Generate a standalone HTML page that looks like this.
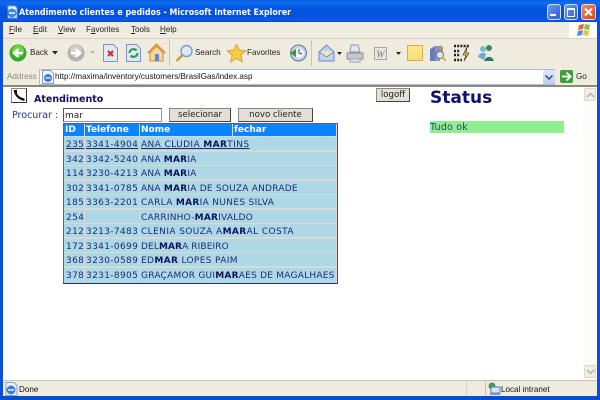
<!DOCTYPE html>
<html><head><meta charset="utf-8">
<style>
html,body{margin:0;padding:0;width:600px;height:400px;overflow:hidden;background:#fff}
div,svg{position:absolute}
.t{white-space:nowrap;font-family:"Liberation Sans",sans-serif;font-size:8.1px;color:#222;line-height:12px}
.v{white-space:nowrap;font-family:"DejaVu Sans",sans-serif;color:#1e2a78;font-size:9px;line-height:12px}
.p{letter-spacing:.35px}
.cell{background:#add8e6}
.hd{background:#0a84ff;color:#fff;font-weight:bold;font-family:"DejaVu Sans",sans-serif;font-size:9px;line-height:13px;white-space:nowrap;padding-left:1px;box-sizing:border-box;height:12px}
.btn{box-sizing:border-box;background:#e4e0d6;border:1px solid #444;border-left-color:#8a8a8a;border-top-color:#8a8a8a;text-align:center;font-family:"DejaVu Sans",sans-serif;font-size:8.6px;color:#222;line-height:13px;white-space:nowrap}
.v b{color:#10105e}
.v u{text-decoration:underline}
</style></head><body>

<!-- window frame -->
<div style="left:0;top:0;width:600px;height:22px;background:linear-gradient(#0a5ee0 0,#0f6df2 3px,#0554e2 8px,#0350dc 16px,#0a5ce8 20px,#0446cc 22px)"></div>
<div style="left:0;top:22px;width:3px;height:378px;background:#0a50d8"></div>
<div style="left:597px;top:22px;width:3px;height:378px;background:#0a50d8"></div>
<div style="left:0;top:396px;width:600px;height:4px;background:#0a4ed0"></div>

<!-- title -->
<svg style="left:5px;top:5px" width="14" height="14" viewBox="0 0 14 14"><path d="M3 1h7l2 2v10H3z" fill="#f0f4ff" stroke="#8aa0c8"/><circle cx="7" cy="8" r="4.500" fill="#3a8ae0"/><path d="M4 8h6" stroke="#fff" stroke-width="1.400"/></svg>
<div class="t" style="left:19px;top:7px;color:#fff;font-weight:bold;font-size:9px;font-family:'DejaVu Sans',sans-serif;transform-origin:left;transform:scaleX(.88)">Atendimento clientes e pedidos - Microsoft Internet Explorer</div>

<!-- window buttons -->
<div style="left:547px;top:4px;width:12px;height:14px;border:1px solid #cfe0fa;border-radius:3px;background:linear-gradient(135deg,#6f9cf0,#2a58d8)"></div>
<div style="left:550px;top:14px;width:6px;height:2px;background:#fff"></div>
<div style="left:564px;top:4px;width:12px;height:14px;border:1px solid #cfe0fa;border-radius:3px;background:linear-gradient(135deg,#6f9cf0,#2a58d8)"></div>
<div style="left:567px;top:8px;width:6px;height:6px;border:1px solid #fff;border-top-width:2px"></div>
<div style="left:581px;top:4px;width:13px;height:14px;border:1px solid #f3d8cc;border-radius:3px;background:linear-gradient(135deg,#f0906a,#d8401c)"></div>
<svg style="left:581px;top:5px" width="15" height="14"><path d="M4 3.500l7 7M11 3.500l-7 7" stroke="#fff" stroke-width="2"/></svg>

<!-- menu bar -->
<div style="left:3px;top:22px;width:594px;height:17px;background:#efebde"></div>
<div style="left:569px;top:22px;width:28px;height:17px;background:#fff"></div>
<svg style="left:576px;top:23px" width="16" height="14" viewBox="0 0 16 14"><path d="M3 2l5-1-1 5-5 1z" fill="#e8643c"/><path d="M9 1l5 1-1 5-5-1z" fill="#8ac23c"/><path d="M2 8l5-1-1 5-5 1z" fill="#4a8ae8"/><path d="M8 7l5 1-1 5-5-1z" fill="#f2c230"/></svg>
<div class="t" style="left:9px;top:24px"><u>F</u>ile</div>
<div class="t" style="left:33px;top:24px"><u>E</u>dit</div>
<div class="t" style="left:58px;top:24px"><u>V</u>iew</div>
<div class="t" style="left:86px;top:24px">F<u>a</u>vorites</div>
<div class="t" style="left:131px;top:24px"><u>T</u>ools</div>
<div class="t" style="left:160px;top:24px"><u>H</u>elp</div>

<!-- toolbar -->
<div style="left:3px;top:38px;width:594px;height:30px;background:#efecdf;border-top:1px solid #d8d4c4;box-sizing:border-box"></div>
<svg style="left:9px;top:44px" width="18" height="18"><circle cx="9" cy="9" r="8.500" fill="#3aa828"/><circle cx="9" cy="7" r="6" fill="#6fd04a"/><path d="M14 9H6M9.500 5L5 9l4.500 4" fill="none" stroke="#fff" stroke-width="2.400"/></svg>
<div class="t" style="left:30px;top:47px">Back</div>
<svg style="left:52px;top:51px" width="6" height="4"><path d="M0 0h6L3 3.500z" fill="#222"/></svg>
<svg style="left:67px;top:44px" width="18" height="18"><circle cx="9" cy="9" r="8.500" fill="#b4b4ac"/><circle cx="9" cy="7" r="6" fill="#cfcfc8"/><path d="M4 9h8M8.500 5L13 9l-4.500 4" fill="none" stroke="#fff" stroke-width="2.400"/></svg>
<svg style="left:90px;top:51px" width="6" height="4"><path d="M0 0h5L2.500 3z" fill="#b8b8b0"/></svg>
<svg style="left:103px;top:44px" width="15" height="18"><path d="M.5.500h10l4 4v13H.5z" fill="#dfe8f8" stroke="#7f94c8"/><path d="M5 7l5 5M10 7l-5 5" stroke="#d8301c" stroke-width="2.200"/></svg>
<svg style="left:126px;top:44px" width="15" height="18"><path d="M.5.500h10l4 4v13H.5z" fill="#dfe8f8" stroke="#7f94c8"/><path d="M3.500 9a4 4 0 0 1 7-2.500M11.500 9a4 4 0 0 1-7 2.500" fill="none" stroke="#2aa03c" stroke-width="2.200"/></svg>
<svg style="left:147px;top:43px" width="19" height="19"><path d="M9.500 1L1 9.500l2 1V18h13v-7.500l2-1z" fill="#f4d8a0" stroke="#c88a3c"/><path d="M9.500 1L1 9.500l2 1 6.500-6.500 6.500 6.500 2-1z" fill="#e8963c"/><rect x="8" y="11" width="4" height="7" fill="#5a88d8"/></svg>
<div style="left:169px;top:40px;width:1px;height:26px;background:#c8c4b4"></div>
<svg style="left:175px;top:44px" width="18" height="19"><circle cx="11.500" cy="7" r="5.500" fill="#dbeafa" stroke="#7a9ac8" stroke-width="1.400"/><path d="M7.500 11l-6 6" stroke="#d8963c" stroke-width="2.600"/></svg>
<div class="t" style="left:195px;top:47px">Search</div>
<svg style="left:227px;top:44px" width="19" height="19"><path d="M9.500 0l2.700 6.200 6.800.6-5.200 4.400 1.600 6.800-5.900-3.600-5.900 3.600 1.600-6.800L0 6.800l6.800-.6z" fill="#f6cc42" stroke="#d8962c" stroke-width=".8"/></svg>
<div class="t" style="left:247px;top:47px">Favorites</div>
<svg style="left:289px;top:44px" width="18" height="18"><circle cx="9.500" cy="9" r="8" fill="#c8d4e0" stroke="#5a7898"/><circle cx="10" cy="9" r="5" fill="#eef4fa"/><path d="M1 9l6-4v8z" fill="#2fa02c"/><path d="M10 5v4l3 1" stroke="#2a4a8a" fill="none"/></svg>
<div style="left:311px;top:40px;width:1px;height:26px;background:#c8c4b4"></div>
<svg style="left:318px;top:44px" width="17" height="18"><path d="M1 8l7.500-7L16 8v9H1z" fill="#bcd4f4" stroke="#6a8ac8"/><path d="M3 7h11v4l-5.500 3L3 11z" fill="#f4e8b0"/><path d="M1 8l7.500 5L16 8" fill="none" stroke="#6a8ac8"/></svg>
<svg style="left:337px;top:52px" width="5" height="3"><path d="M0 0h5L2.500 3z" fill="#222"/></svg>
<svg style="left:346px;top:44px" width="18" height="19"><path d="M5 1h7l2 7H4z" fill="#dfe8f4" stroke="#8a9ab0"/><path d="M1 9h16v6H1z" fill="#c4c8cc" stroke="#8a9098"/><path d="M4 15h10v3H4z" fill="#e8e8e8" stroke="#9aa0a8"/></svg>
<svg style="left:374px;top:47px" width="13" height="13"><rect x=".5" y=".5" width="12" height="12" fill="#e8e8e4" stroke="#a8a8a0"/><text x="2" y="10.500" font-family="Liberation Serif,serif" font-size="10" font-weight="bold" font-style="italic" fill="#909088">W</text></svg>
<svg style="left:396px;top:52px" width="5" height="3"><path d="M0 0h5L2.500 3z" fill="#222"/></svg>
<div style="left:407px;top:45px;width:16px;height:16px;background:linear-gradient(#fbe88c,#f8dc78);border:1px solid #d8b040;box-sizing:border-box"></div>
<svg style="left:429px;top:44px" width="17" height="18"><path d="M1 5l5-3v15H1z" fill="#6a7ab8"/><path d="M6 2h5v15H6z" fill="#8a90c8"/><path d="M11 1l3 2v6h-3z" fill="#b89868"/><circle cx="11" cy="11" r="3.500" fill="#d8e8f4" stroke="#6a7a98"/><path d="M13 13l3.500 3.500" stroke="#d8a030" stroke-width="1.600"/></svg>
<svg style="left:453px;top:44px" width="18" height="18"><path d="M1 2h15M1 7h6M1 11h6M1 16h8" stroke="#222" stroke-width="2.400" stroke-dasharray="2 1.200"/><path d="M14 3l-4 8h3l-2 6 5-8h-3z" fill="#f0c820" stroke="#222" stroke-width=".6"/></svg>
<svg style="left:477px;top:44px" width="18" height="18"><circle cx="6" cy="5" r="3" fill="#7ab8d8"/><circle cx="12" cy="4" r="3" fill="#3a8a58"/><path d="M7 17a5.500 7 0 0 1 10 0z" fill="#2a7a68"/><path d="M1 13a5 5 0 0 1 8-3l-2 6z" fill="#6aa8c8"/></svg>

<!-- address bar -->
<div style="left:3px;top:68px;width:594px;height:18px;background:#efecdf"></div>
<div class="t" style="left:7px;top:71px;color:#8a8a80">Address</div>
<div style="left:39px;top:69px;width:516px;height:16px;background:#fff;border:1px solid #a8bcd8;box-sizing:border-box"></div>
<svg style="left:41px;top:70px" width="14" height="14"><path d="M1.500.500h8l3 3v10h-11z" fill="#f4f6fc" stroke="#8a9ac8"/><circle cx="7" cy="8" r="4" fill="#3a80d8"/><path d="M4.500 8h5" stroke="#fff" stroke-width="1.200"/></svg>
<div class="t" style="left:55px;top:71px;color:#111">http://maxima/inventory/customers/BrasilGas/index.asp</div>
<div style="left:543px;top:70px;width:12px;height:14px;background:linear-gradient(#dfe8fb,#b8cdf4);border-radius:2px"></div>
<svg style="left:545px;top:75px" width="8" height="5"><path d="M.5.500L4 4 7.500.500" fill="none" stroke="#3a4a78" stroke-width="1.500"/></svg>
<div style="left:560px;top:70px;width:13px;height:13px;background:#3ea03c;border-radius:2px"></div>
<svg style="left:560px;top:70px" width="13" height="13"><path d="M2 6.500h8M6.500 2.500l4 4-4 4" fill="none" stroke="#fff" stroke-width="1.800"/></svg>
<div class="t" style="left:576px;top:71px">Go</div>

<!-- content -->
<div style="left:3px;top:85px;width:594px;height:2px;background:#8a8a78"></div>
<div style="left:3px;top:87px;width:580px;height:293px;background:#fff"></div>

<!-- scrollbar -->
<div style="left:583px;top:87px;width:14px;height:293px;background:#fbfbf7"></div>
<div style="left:584px;top:88px;width:12px;height:13px;background:#f0efe4;border:1px solid #dcd8c8;border-radius:2px;box-sizing:border-box"></div>
<svg style="left:586px;top:92px" width="9" height="6"><path d="M1 5l3.500-3.500L8 5" fill="none" stroke="#b4b2a0" stroke-width="1.500"/></svg>
<div style="left:584px;top:365px;width:12px;height:13px;background:#f0efe4;border:1px solid #dcd8c8;border-radius:2px;box-sizing:border-box"></div>
<svg style="left:586px;top:369px" width="9" height="6"><path d="M1 1l3.500 3.500L8 1" fill="none" stroke="#b4b2a0" stroke-width="1.500"/></svg>

<!-- phone icon -->
<div style="left:11px;top:88px;width:16px;height:15px;background:#fff;border:1px solid #888;border-right-color:#333;border-bottom-color:#333;box-sizing:border-box"></div>
<svg style="left:12px;top:89px" width="14" height="13"><path d="M3 2c1 5 4 7 8 8.500" fill="none" stroke="#111" stroke-width="2.200"/><path d="M1.500 1l3.500 0 0 3-2.500 0zM9 8.500l3.500 1 0 2.500-3.500-1z" fill="#111"/></svg>

<div class="v" style="left:34px;top:94px;font-weight:bold;color:#10105e;font-size:9.500px">Atendimento</div>
<div class="v" style="left:12px;top:110px;font-size:9.500px;color:#2a3490">Procurar :</div>
<div style="left:63px;top:108px;width:99px;height:14px;background:#fff;border:1px solid #555;border-right-color:#999;border-bottom-color:#999;box-sizing:border-box"></div>
<div class="v" style="left:65px;top:110px;color:#222">mar</div>
<div class="btn" style="left:169px;top:108px;width:62px;height:14px">selecionar</div>
<div class="btn" style="left:238px;top:108px;width:75px;height:14px">novo cliente</div>
<div class="btn" style="left:376px;top:88px;width:34px;height:14px">logoff</div>

<!-- status -->
<div class="v" style="left:430px;top:89px;font-size:17px;font-weight:bold;color:#10106e;line-height:18px">Status</div>
<div style="left:430px;top:121px;width:134px;height:12px;background:#90ee90"></div>
<div class="v" style="left:430px;top:122px;color:#2a3a80;font-size:9.500px;letter-spacing:.2px">Tudo ok</div>

<!-- table -->
<div style="left:63px;top:123px;width:275px;height:161px;background:#d8d8d4;border:1px solid #5a5aa0;border-right:1px solid #4a4a80;border-bottom:1px solid #2a2a70;box-sizing:border-box"></div>
<div class="hd" style="left:64px;top:124px;width:20px">ID</div>
<div class="hd" style="left:85px;top:124px;width:54px">Telefone</div>
<div class="hd" style="left:140px;top:124px;width:92px">Nome</div>
<div class="hd" style="left:233px;top:124px;width:103px">fechar</div>

<div class="cell" style="left:64px;top:137px;width:20px;height:13px"></div><div class="cell" style="left:85px;top:137px;width:54px;height:13px"></div><div class="cell" style="left:140px;top:137px;width:196px;height:13px"></div>
<div class="cell" style="left:64px;top:152px;width:20px;height:13px"></div><div class="cell" style="left:85px;top:152px;width:54px;height:13px"></div><div class="cell" style="left:140px;top:152px;width:196px;height:13px"></div>
<div class="cell" style="left:64px;top:166px;width:20px;height:13px"></div><div class="cell" style="left:85px;top:166px;width:54px;height:13px"></div><div class="cell" style="left:140px;top:166px;width:196px;height:13px"></div>
<div class="cell" style="left:64px;top:181px;width:20px;height:13px"></div><div class="cell" style="left:85px;top:181px;width:54px;height:13px"></div><div class="cell" style="left:140px;top:181px;width:196px;height:13px"></div>
<div class="cell" style="left:64px;top:195px;width:20px;height:13px"></div><div class="cell" style="left:85px;top:195px;width:54px;height:13px"></div><div class="cell" style="left:140px;top:195px;width:196px;height:13px"></div>
<div class="cell" style="left:64px;top:210px;width:20px;height:13px"></div><div class="cell" style="left:85px;top:210px;width:54px;height:13px"></div><div class="cell" style="left:140px;top:210px;width:196px;height:13px"></div>
<div class="cell" style="left:64px;top:224px;width:20px;height:13px"></div><div class="cell" style="left:85px;top:224px;width:54px;height:13px"></div><div class="cell" style="left:140px;top:224px;width:196px;height:13px"></div>
<div class="cell" style="left:64px;top:239px;width:20px;height:13px"></div><div class="cell" style="left:85px;top:239px;width:54px;height:13px"></div><div class="cell" style="left:140px;top:239px;width:196px;height:13px"></div>
<div class="cell" style="left:64px;top:253px;width:20px;height:13px"></div><div class="cell" style="left:85px;top:253px;width:54px;height:13px"></div><div class="cell" style="left:140px;top:253px;width:196px;height:13px"></div>
<div class="cell" style="left:64px;top:268px;width:20px;height:15px"></div><div class="cell" style="left:85px;top:268px;width:54px;height:15px"></div><div class="cell" style="left:140px;top:268px;width:196px;height:15px"></div>

<div class="v p" style="left:66px;top:139px"><u>235</u></div><div class="v p" style="left:86px;top:139px"><u>3341-4904</u></div><div class="v" style="left:141px;top:139px;letter-spacing:.39px"><u>ANA CLUDIA <b>MAR</b>TINS</u></div>
<div class="v p" style="left:66px;top:154px">342</div><div class="v p" style="left:86px;top:154px">3342-5240</div><div class="v" style="left:141px;top:154px;letter-spacing:.22px">ANA <b>MAR</b>IA</div>
<div class="v p" style="left:66px;top:168px">114</div><div class="v p" style="left:86px;top:168px">3230-4213</div><div class="v" style="left:141px;top:168px;letter-spacing:.22px">ANA <b>MAR</b>IA</div>
<div class="v p" style="left:66px;top:183px">302</div><div class="v p" style="left:86px;top:183px">3341-0785</div><div class="v" style="left:141px;top:183px;letter-spacing:.23px">ANA <b>MAR</b>IA DE SOUZA ANDRADE</div>
<div class="v p" style="left:66px;top:197px">185</div><div class="v p" style="left:86px;top:197px">3363-2201</div><div class="v" style="left:141px;top:197px;letter-spacing:.32px">CARLA <b>MAR</b>IA NUNES SILVA</div>
<div class="v p" style="left:66px;top:212px">254</div><div class="v" style="left:141px;top:212px;letter-spacing:.22px">CARRINHO-<b>MAR</b>IVALDO</div>
<div class="v p" style="left:66px;top:226px">212</div><div class="v p" style="left:86px;top:226px">3213-7483</div><div class="v" style="left:141px;top:226px;letter-spacing:.4px">CLENIA SOUZA A<b>MAR</b>AL COSTA</div>
<div class="v p" style="left:66px;top:241px">172</div><div class="v p" style="left:86px;top:241px">3341-0699</div><div class="v" style="left:141px;top:241px;letter-spacing:.1px">DEL<b>MAR</b>A RIBEIRO</div>
<div class="v p" style="left:66px;top:255px">368</div><div class="v p" style="left:86px;top:255px">3230-0589</div><div class="v" style="left:141px;top:255px;letter-spacing:.35px">ED<b>MAR</b> LOPES PAIM</div>
<div class="v p" style="left:66px;top:270px">378</div><div class="v p" style="left:86px;top:270px">3231-8905</div><div class="v" style="left:141px;top:270px;letter-spacing:.23px">GRAÇAMOR GUI<b>MAR</b>AES DE MAGALHAES</div>

<!-- status bar -->
<div style="left:3px;top:380px;width:594px;height:16px;background:#efecdf;border-top:1px solid #c8c4b4;box-sizing:border-box"></div>
<svg style="left:4px;top:382px" width="14" height="14"><path d="M2 .500h8l3 3v10H2z" fill="#eef2fa" stroke="#8aa0c8"/><circle cx="7" cy="8" r="4.500" fill="#3a80d8"/><path d="M4 8h6" stroke="#fff" stroke-width="1.300"/></svg>
<div class="t" style="left:19px;top:384px;color:#111">Done</div>
<div style="left:466px;top:381px;width:1px;height:15px;background:#d8d4c4"></div>
<div style="left:485px;top:381px;width:1px;height:15px;background:#c8c4b4"></div>
<svg style="left:487px;top:382px" width="14" height="14"><circle cx="5" cy="4" r="3.500" fill="#3a9a58"/><rect x="4" y="5" width="9" height="6" fill="#d8e4f4" stroke="#5a78b8"/><rect x="3" y="11" width="10" height="2" fill="#7a98c8"/></svg>
<div class="t" style="left:501px;top:384px;color:#111">Local intranet</div>
</body></html>
